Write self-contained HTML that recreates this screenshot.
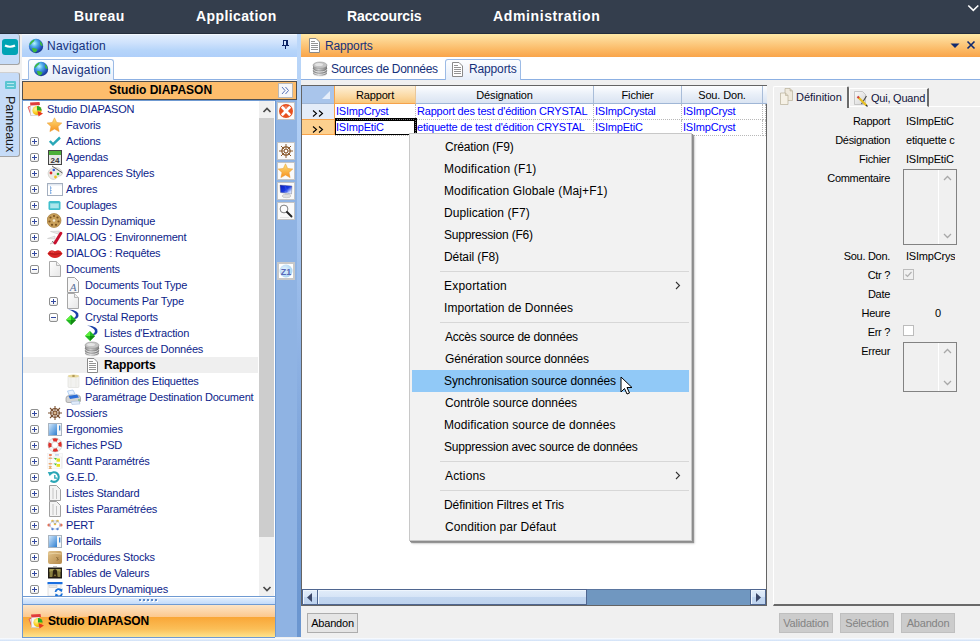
<!DOCTYPE html>
<html><head><meta charset="utf-8"><style>
*{margin:0;padding:0;box-sizing:border-box}
html,body{width:980px;height:641px;overflow:hidden;background:#f0f0f0;font-family:"Liberation Sans",sans-serif;position:relative}
.a{position:absolute}
.t{position:absolute;white-space:nowrap;line-height:1}
#top{left:0;top:0;width:980px;height:34px;background:#343e4d;border-bottom:1px solid #242e3c}
.menu{position:absolute;top:8px;color:#fff;font-weight:bold;font-size:14px;line-height:16px}
#strip{left:0;top:34px;width:21px;height:607px;background:#f0f0f0}
#navhdr{left:22px;top:34px;width:275px;height:23px;background:linear-gradient(#e2eefd,#cfe2fc 35%,#b6d5fa 70%,#afcffa);border-top:1px solid #f4f9ff}
.navtxt{color:#15307a;font-size:12px}
#navtabs{left:22px;top:57px;width:275px;height:23px;background:#fff;border-bottom:1px solid #8cb0e3}
.tab{position:absolute;border:1px solid #9cbbe6;border-bottom:none;border-radius:3px 3px 0 0;background:linear-gradient(#fdfeff,#e6eefa)}
#sect{left:22px;top:81px;width:275px;height:19px;background:#fdbd6c;border:1px solid #505050}
#tree{left:22px;top:100px;width:253px;height:497px;background:#fff;border-left:1px solid #6f9ad2;border-top:1px solid #6f9ad2}
.ti{position:absolute;height:16px;font-size:11px;letter-spacing:-0.2px;color:#0d1d8a;line-height:16px;white-space:nowrap}
.pm{position:absolute;width:9px;height:9px;border:1px solid #8e8f8f;border-radius:2px;background:linear-gradient(#fff,#fff 50%,#ececec)}
.pm:before{content:"";position:absolute;left:1px;top:3px;width:5px;height:1px;background:#3248a0}
.pm.p:after{content:"";position:absolute;left:3px;top:1px;width:1px;height:5px;background:#3248a0}
#vs{left:259px;top:101px;width:16px;height:495px;background:#f0f0f0}
#iconcol{left:275px;top:100px;width:22px;height:537px;background:#8fb3e3;border-left:1px solid #6f9ad2}
#split{left:297px;top:34px;width:4px;height:603px;background:linear-gradient(#bcd8fa,#a3c3ee 33%,#82a8dd 65%,#6b96d0 95%)}
#mhdr{left:301px;top:34px;width:679px;height:23px;background:linear-gradient(#ffe9a6,#fdd28c 30%,#fbb863 70%,#f9a44a)}
#mtabs{left:301px;top:57px;width:679px;height:23px;background:#fff;border-bottom:1px solid #8cb0e3}
#grid{left:301px;top:85px;width:466px;height:521px;background:#fff;border:1px solid #646464}
.gh{position:absolute;top:0;height:18px;padding-top:1px;background:linear-gradient(#fdfeff,#e9eff8 50%,#dae4f2);border-right:1px solid #a9bdd9;border-bottom:1px solid #9fb6d6;font-size:11px;letter-spacing:-0.15px;color:#000;text-align:center;line-height:17px}
.gc{position:absolute;height:16px;font-size:11px;letter-spacing:-0.2px;color:#0000ff;line-height:15px;white-space:nowrap;overflow:hidden;padding-left:1px;border-right:1px dotted #b8b8b8;border-bottom:1px dotted #b8b8b8}
.lab{position:absolute;font-size:11px;letter-spacing:-0.3px;color:#000;white-space:nowrap;line-height:11px;text-align:right}
.val{position:absolute;font-size:11px;letter-spacing:-0.2px;color:#000;white-space:nowrap;line-height:11px}
.btn{position:absolute;height:20px;font-size:12px;text-align:center;line-height:18px}
#menu{left:409px;top:133px;width:283px;height:408px;background:#f2f2f2;border:1px solid #c8c8c8;box-shadow:1px 1px 0 #8c8c8c,2px 2px 1px rgba(0,0,0,.35),3px 3px 2px rgba(0,0,0,.12)}
.mi{position:absolute;font-size:12px;color:#000;white-space:nowrap;line-height:12px}
.sep{position:absolute;width:249px;height:1px;background:#d7d7d7}

</style></head><body>
<div id="top" class="a"></div>
<div class="t" style="left:74px;top:8px;font:bold 14px 'Liberation Sans';letter-spacing:0.400px;color:#fff;line-height:16px">Bureau</div>
<div class="t" style="left:196px;top:8px;font:bold 14px 'Liberation Sans';letter-spacing:0.400px;color:#fff;line-height:16px">Application</div>
<div class="t" style="left:347px;top:8px;font:bold 14px 'Liberation Sans';letter-spacing:-0.111px;color:#fff;line-height:16px">Raccourcis</div>
<div class="t" style="left:493px;top:8px;font:bold 14px 'Liberation Sans';letter-spacing:0.615px;color:#fff;line-height:16px">Administration</div>
<svg class="a" style="left:966px;top:3px" width="14" height="10"><path d="M2.3 2.5 L7.3 7.3 L12.3 2.5" stroke="#fff" stroke-width="1.6" fill="none"/></svg>
<div id="strip" class="a">
  <div class="a" style="left:0;top:0;width:20px;height:31px;background:#c6dcf8;border-right:1px solid #a4a4a4;border-bottom:1px solid #a4a4a4;border-radius:0 3px 3px 0"></div>
  <div class="a" style="left:2px;top:5px;width:16px;height:16px;background:#00a3b4;border-radius:3px 3px 3px 3px"></div>
  <svg class="a" style="left:4px;top:10px" width="12" height="6"><path d="M1 1.5 Q6 4 11 1.5" stroke="#fff" stroke-width="2.2" fill="none"/></svg>
  <div class="a" style="left:0;top:38px;width:20px;height:85px;background:#c6dcf8;border-right:1px solid #a4a4a4;border-bottom:1px solid #a4a4a4;border-top:1px solid #d0d0d0;border-radius:0 3px 3px 0"></div>
  <div class="a" style="left:5px;top:47px;width:11px;height:8px;background:#5cc6d2;border-radius:1px"></div>
  <div class="a" style="left:7px;top:49px;width:7px;height:1px;background:#b6e8ee"></div>
  <div class="a" style="left:7px;top:52px;width:7px;height:1px;background:#b6e8ee"></div>
  <div class="t" style="left:16px;top:62px;transform-origin:0 0;transform:rotate(90deg);font-size:12.5px;color:#1a1a1a">Panneaux</div>
</div>
<div id="navhdr" class="a"></div>
<svg class="a" style="left:28px;top:38px" width="16" height="16" viewBox="0 0 16 16"><defs><radialGradient id="gl1" cx="0.38" cy="0.32" r="0.75"><stop offset="0" stop-color="#b8f4ff"/><stop offset="0.35" stop-color="#4aa6e8"/><stop offset="0.75" stop-color="#2050b8"/><stop offset="1" stop-color="#15287a"/></radialGradient></defs><circle cx="8" cy="8" r="7.2" fill="url(#gl1)"/><path d="M1.5 6 Q3 2 7 1.5 Q6 3.5 4 5 Q3 7 1.5 7Z M4 10 Q7 9.5 9.5 11.5 Q9 14 6 14.5 Q4 13 4 10Z M12 3 Q14.5 5 14.8 8 Q13 8.5 12 6Z" fill="#3dbb3d"/></svg>
<div class="t" style="left:47px;top:39px;font:12px 'Liberation Sans';letter-spacing:0.222px;color:#15307a;line-height:14px">Navigation</div>
<svg class="a" style="left:281px;top:39px" width="9" height="11" shape-rendering="crispEdges" fill="#0a2264"><rect x="2" y="1" width="5" height="1"/><rect x="2" y="1" width="1" height="5"/><rect x="5" y="1" width="2" height="5"/><rect x="1" y="6" width="7" height="1"/><rect x="4" y="7" width="1" height="3"/></svg>
<div id="navtabs" class="a">
  <div class="tab" style="left:6px;top:2px;width:86px;height:21px"></div>
</div>
<svg class="a" style="left:33px;top:61px" width="16" height="16" viewBox="0 0 16 16"><defs><radialGradient id="gl2" cx="0.38" cy="0.32" r="0.75"><stop offset="0" stop-color="#b8f4ff"/><stop offset="0.35" stop-color="#4aa6e8"/><stop offset="0.75" stop-color="#2050b8"/><stop offset="1" stop-color="#15287a"/></radialGradient></defs><circle cx="8" cy="8" r="7.2" fill="url(#gl2)"/><path d="M1.5 6 Q3 2 7 1.5 Q6 3.5 4 5 Q3 7 1.5 7Z M4 10 Q7 9.5 9.5 11.5 Q9 14 6 14.5 Q4 13 4 10Z M12 3 Q14.5 5 14.8 8 Q13 8.5 12 6Z" fill="#3dbb3d"/></svg>
<div class="t" style="left:52px;top:63px;font:12px 'Liberation Sans';letter-spacing:0.222px;color:#15307a;line-height:14px">Navigation</div>
<div id="sect" class="a"></div>
<div class="t" style="left:109px;top:84px;font:bold 12px 'Liberation Sans';letter-spacing:0.000px;color:#000;line-height:12px">Studio DIAPASON</div>
<div class="a" style="left:278px;top:83px;width:15px;height:15px;background:#f6f7fa;border:1px solid #b9b9b9"></div>
<svg class="a" style="left:280px;top:85px" width="11" height="11"><path d="M2 2 L5 5.5 L2 9 M5.5 2 L8.5 5.5 L5.5 9" stroke="#5a74b8" stroke-width="1" fill="none"/></svg>
<div id="tree" class="a"></div>
<svg class="a" style="left:27px;top:101px" width="16" height="16" viewBox="0 0 16 16"><defs><radialGradient id="sbg" cx="0.35" cy="0.35" r="0.7"><stop offset="0" stop-color="#fff4a0"/><stop offset="0.6" stop-color="#f8d020"/><stop offset="1" stop-color="#e8a010"/></radialGradient></defs><path d="M1 6 L4 5 L7 13 L4 14Z" fill="#f5c8c8" stroke="#e04848" stroke-width="0.8"/><rect x="3.5" y="3.5" width="8" height="11" fill="#f4f6f8" stroke="#c8c8c8" stroke-width="0.6"/><path d="M3 1.5 L12.5 1 L13 4 L3.5 4.5Z" fill="#e03c3c"/><circle cx="10" cy="9.5" r="4.6" fill="url(#sbg)"/><path d="M10 9.5 V4.9 A4.6 4.6 0 0 1 14.6 9.5Z" fill="#28a828"/><path d="M10.5 10 L16 12.5 L11.5 15.5Z" fill="#e83a20"/></svg>
<div class="ti" style="left:47px;top:101px">Studio DIAPASON</div>
<svg class="a" style="left:47px;top:117px" width="16" height="16" viewBox="0 0 16 16"><defs><linearGradient id="stg" x1="0" y1="0" x2="0" y2="1"><stop offset="0" stop-color="#fde27a"/><stop offset="1" stop-color="#f7901e"/></linearGradient></defs><path d="M7.5 0.8 L9.7 5.5 L14.8 6 L11 9.5 L12.1 14.6 L7.5 12 L2.9 14.6 L4 9.5 L0.2 6 L5.3 5.5 Z" fill="url(#stg)" stroke="#e8962a" stroke-width="0.5" stroke-linejoin="round"/></svg>
<div class="ti" style="left:66px;top:117px">Favoris</div>
<div class="pm p" style="left:30px;top:137px"></div>
<svg class="a" style="left:47px;top:133px" width="16" height="16" viewBox="0 0 16 16"><path d="M2.8 8 L6 11.3 L13 4.5" stroke="#2aa8b8" stroke-width="2.5" fill="none"/></svg>
<div class="ti" style="left:66px;top:133px">Actions</div>
<div class="pm p" style="left:30px;top:153px"></div>
<svg class="a" style="left:47px;top:149px" width="16" height="16" viewBox="0 0 16 16"><rect x="1.5" y="1.5" width="13" height="14" fill="#e6e6e6" stroke="#444"/><rect x="2" y="2" width="12" height="4" fill="#4caf38"/><text x="8" y="14" font-size="8" font-weight="bold" text-anchor="middle" fill="#333" font-family="Liberation Sans">24</text></svg>
<div class="ti" style="left:66px;top:149px">Agendas</div>
<div class="pm p" style="left:30px;top:169px"></div>
<svg class="a" style="left:47px;top:165px" width="16" height="16" viewBox="0 0 16 16"><path d="M8 2.5 C13 2.5 15.5 5.5 15 9 C14.5 11.5 12 10.5 10.5 12 C9 14 7 15 4.5 14 C1.5 12.5 0.5 9 1.5 6.5 C2.5 4 5 2.5 8 2.5Z" fill="#ecebe6" stroke="#b8b8b0" stroke-width="0.5"/><circle cx="4" cy="8" r="1.4" fill="#d82a2a"/><circle cx="6.8" cy="5" r="1.3" fill="#2a5ad8"/><circle cx="11" cy="9" r="1.3" fill="#2aa82a"/><circle cx="8.5" cy="12" r="1.4" fill="#f0c020"/><path d="M5 1 L15.5 8" stroke="#555" stroke-width="0.9"/></svg>
<div class="ti" style="left:66px;top:165px">Apparences Styles</div>
<div class="pm p" style="left:30px;top:185px"></div>
<svg class="a" style="left:47px;top:181px" width="16" height="16" viewBox="0 0 16 16"><rect x="0.5" y="2.5" width="15" height="12" fill="#fff" stroke="#a4afbf"/><rect x="1" y="3" width="14" height="1.5" fill="#e2e8f0"/><path d="M3.5 5.5 V13 M3.5 7 H5.5 M3.5 9.5 H5.5 M3.5 12 H5.5" stroke="#4a8ad8" stroke-width="1" stroke-dasharray="1 1" fill="none"/></svg>
<div class="ti" style="left:66px;top:181px">Arbres</div>
<div class="pm p" style="left:30px;top:201px"></div>
<svg class="a" style="left:47px;top:197px" width="16" height="16" viewBox="0 0 16 16"><rect x="1.5" y="4" width="12" height="9" rx="1.5" fill="#3fbfcc"/><rect x="3" y="6" width="9" height="5.5" fill="#7fd8e0"/><rect x="3.5" y="7.5" width="8" height="1" fill="#d8f4f7"/><rect x="3.5" y="9.5" width="8" height="1" fill="#d8f4f7"/></svg>
<div class="ti" style="left:66px;top:197px">Couplages</div>
<div class="pm p" style="left:30px;top:217px"></div>
<svg class="a" style="left:47px;top:213px" width="16" height="16" viewBox="0 0 16 16"><circle cx="7" cy="7.5" r="7" fill="#c9a05a" stroke="#9a7030" stroke-width="0.6"/><g fill="#7a5220"><circle cx="7" cy="3" r="1.1"/><circle cx="10.5" cy="4.5" r="1.1"/><circle cx="11.5" cy="8.5" r="1.1"/><circle cx="9" cy="11.8" r="1.1"/><circle cx="5" cy="11.8" r="1.1"/><circle cx="2.5" cy="8.5" r="1.1"/><circle cx="3.5" cy="4.5" r="1.1"/></g><circle cx="7" cy="7.5" r="1.3" fill="#f4e8d0"/></svg>
<div class="ti" style="left:66px;top:213px">Dessin Dynamique</div>
<div class="pm p" style="left:30px;top:233px"></div>
<svg class="a" style="left:47px;top:229px" width="16" height="16" viewBox="0 0 16 16"><path d="M3.5 2.5 L12.5 2 L11 5 Z" fill="#e8e8e8" stroke="#c0c0c0" stroke-width="0.5"/><path d="M0.5 9.5 L8 7 L8 10 Z" fill="#eaeaea" stroke="#c0c0c0" stroke-width="0.5"/><path d="M3 15 L8 11 L9 13 Z" fill="#e4e4e4" stroke="#b8b8b8" stroke-width="0.5"/><path d="M5 12 L7 14" stroke="#666" stroke-width="0.8"/><path d="M13.8 4.2 L8 14" stroke="#c8102e" stroke-width="3" stroke-linecap="round"/></svg>
<div class="ti" style="left:66px;top:229px">DIALOG : Environnement</div>
<div class="pm p" style="left:30px;top:249px"></div>
<svg class="a" style="left:47px;top:245px" width="16" height="16" viewBox="0 0 16 16"><path d="M0.5 8.5 Q3 4.5 6 5.5 Q7.5 6 8 6.3 Q8.5 6 10 5.5 Q13 4.5 15.5 8.5 Q12.5 13 8 13 Q3.5 13 0.5 8.5Z" fill="#d82424"/><path d="M1.5 8.5 Q8 10 14.5 8.5" stroke="#9a1010" stroke-width="0.7" fill="none"/><path d="M4 7 Q6 6.5 7 7.5" stroke="#f07070" stroke-width="0.6" fill="none"/></svg>
<div class="ti" style="left:66px;top:245px">DIALOG : Requêtes</div>
<div class="pm m" style="left:30px;top:265px"></div>
<svg class="a" style="left:47px;top:261px" width="16" height="16" viewBox="0 0 16 16"><defs><linearGradient id="pgg" x1="0" y1="0" x2="1" y2="1"><stop offset="0" stop-color="#ffffff"/><stop offset="1" stop-color="#e6e6e6"/></linearGradient></defs><path d="M2.5 0.5 H9.5 L13.5 4.5 V15.5 H2.5 Z" fill="url(#pgg)" stroke="#a8a8a8"/><path d="M9.5 0.5 V4.5 H13.5" fill="#f0f0f0" stroke="#b8b8b8"/></svg>
<div class="ti" style="left:66px;top:261px">Documents</div>
<svg class="a" style="left:65px;top:277px" width="16" height="16" viewBox="0 0 16 16"><path d="M2.5 0.5 H9.5 L13.5 4.5 V15.5 H2.5 Z" fill="#f8f8f8" stroke="#a0a0a0"/><text x="8" y="13.5" font-size="11" font-style="italic" font-family="Liberation Serif" text-anchor="middle" fill="#5a6f98">A</text></svg>
<div class="ti" style="left:85px;top:277px">Documents Tout Type</div>
<div class="pm p" style="left:49px;top:297px"></div>
<svg class="a" style="left:65px;top:293px" width="16" height="16" viewBox="0 0 16 16"><defs><linearGradient id="pgg" x1="0" y1="0" x2="1" y2="1"><stop offset="0" stop-color="#ffffff"/><stop offset="1" stop-color="#e6e6e6"/></linearGradient></defs><path d="M2.5 0.5 H9.5 L13.5 4.5 V15.5 H2.5 Z" fill="url(#pgg)" stroke="#a8a8a8"/><path d="M9.5 0.5 V4.5 H13.5" fill="#f0f0f0" stroke="#b8b8b8"/></svg>
<div class="ti" style="left:85px;top:293px">Documents Par Type</div>
<div class="pm m" style="left:49px;top:313px"></div>
<svg class="a" style="left:65px;top:309px" width="16" height="16" viewBox="0 0 16 16"><path d="M3 0.5 Q14.5 1 13.5 7 Q12.5 10.5 8 9.8 Q11 8.5 11 6 Q10 2.5 3 0.5Z" fill="#1c40a8"/><path d="M6 6 L11 11 L6 16 L1 11Z" fill="#22b822"/><path d="M6 6 L1 11 H6Z" fill="#5cf03c"/><path d="M6 11 H11 L6 16Z" fill="#138a13"/></svg>
<div class="ti" style="left:85px;top:309px">Crystal Reports</div>
<svg class="a" style="left:84px;top:325px" width="16" height="16" viewBox="0 0 16 16"><path d="M3 0.5 Q14.5 1 13.5 7 Q12.5 10.5 8 9.8 Q11 8.5 11 6 Q10 2.5 3 0.5Z" fill="#1c40a8"/><path d="M6 6 L11 11 L6 16 L1 11Z" fill="#22b822"/><path d="M6 6 L1 11 H6Z" fill="#5cf03c"/><path d="M6 11 H11 L6 16Z" fill="#138a13"/></svg>
<div class="ti" style="left:104px;top:325px">Listes d'Extraction</div>
<svg class="a" style="left:84px;top:341px" width="16" height="16" viewBox="0 0 16 16"><defs><linearGradient id="dbg" x1="0" y1="0" x2="1" y2="0"><stop offset="0" stop-color="#8a8a8a"/><stop offset="0.4" stop-color="#d0d0d0"/><stop offset="1" stop-color="#7a7a7a"/></linearGradient></defs><path d="M1 4 V12.5 A7 2.8 0 0 0 15 12.5 V4Z" fill="url(#dbg)"/><ellipse cx="8" cy="4.2" rx="7" ry="3.2" fill="#c4c4c4" stroke="#8c8c8c" stroke-width="0.5"/><ellipse cx="7" cy="3.5" rx="4" ry="1.6" fill="#e4e4e4"/><path d="M1 8 A7 2.8 0 0 0 15 8 M1 10.3 A7 2.8 0 0 0 15 10.3 M1 12.5 A7 2.8 0 0 0 15 12.5" stroke="#f4f4f4" stroke-width="0.8" fill="none"/><path d="M1 7.2 A7 2.8 0 0 0 15 7.2 M1 9.5 A7 2.8 0 0 0 15 9.5" stroke="#6a6a6a" stroke-width="0.5" fill="none"/></svg>
<div class="ti" style="left:104px;top:341px">Sources de Données</div>
<div class="a" style="left:23px;top:357px;width:235px;height:16px;background:#efefef"></div>
<svg class="a" style="left:84px;top:357px" width="16" height="16" viewBox="0 0 16 16"><path d="M3.5 1.5 H10 L13.5 5 V15.5 H3.5 Z" fill="#fff" stroke="#8a8a8a"/><path d="M5 6.5 H12 M5 8.5 H12 M5 10.5 H12 M5 12.5 H12 M5 4.5 H9" stroke="#888" stroke-width="0.9"/></svg>
<div class="ti" style="left:104px;top:357px;font-weight:bold;color:#000;letter-spacing:-0.15px;font-size:12px">Rapports</div>
<svg class="a" style="left:65px;top:373px" width="16" height="16" viewBox="0 0 16 16"><rect x="3" y="2.5" width="11" height="12" rx="1" fill="#f2f2f0" stroke="#dcdcd6" stroke-width="0.6"/><ellipse cx="8.5" cy="3" rx="5.5" ry="1.6" fill="#e8d89a"/><ellipse cx="8.5" cy="3" rx="1.5" ry="0.7" fill="#9a8040"/><path d="M6 4.5 V14 M11 4.5 V14" stroke="#e6e6e0" stroke-width="0.6"/></svg>
<div class="ti" style="left:85px;top:373px">Définition des Etiquettes</div>
<svg class="a" style="left:65px;top:389px" width="16" height="16" viewBox="0 0 16 16"><path d="M2.5 2 L8 1 L10 5 L4 6Z" fill="#e8f2ff" stroke="#90b8e8" stroke-width="0.6"/><path d="M1 9 Q1 7 4 6.5 L13 6 Q15.5 6.5 15.5 9 V12 Q15.5 13.5 13 13.5 H3 Q1 13.5 1 12Z" fill="#d4d4d4" stroke="#8a8a8a" stroke-width="0.6"/><path d="M3.5 7 L12 5.5 L14 8.5 L5 10Z" fill="#2a6ed8"/><circle cx="14" cy="11" r="0.7" fill="#30b030"/><path d="M6 12.5 L14 12 L15 15 L7 15.5Z" fill="#e0ecfa" stroke="#a0b8d8" stroke-width="0.5"/></svg>
<div class="ti" style="left:85px;top:389px">Paramétrage Destination Document</div>
<div class="pm p" style="left:30px;top:409px"></div>
<svg class="a" style="left:47px;top:405px" width="16" height="16" viewBox="0 0 16 16"><circle cx="8" cy="8" r="4.3" fill="none" stroke="#7a5030" stroke-width="1.3"/><path d="M8 1 V15 M1 8 H15 M3 3 L13 13 M13 3 L3 13" stroke="#7a5030" stroke-width="1.1"/><circle cx="8" cy="8" r="1.7" fill="#d9b48a" stroke="#7a5030" stroke-width="0.6"/></svg>
<div class="ti" style="left:66px;top:405px">Dossiers</div>
<div class="pm p" style="left:30px;top:425px"></div>
<svg class="a" style="left:47px;top:421px" width="16" height="16" viewBox="0 0 16 16"><defs><linearGradient id="wg" x1="0" y1="0" x2="1" y2="1"><stop offset="0" stop-color="#cfe6fb"/><stop offset="1" stop-color="#2f7fd0"/></linearGradient></defs><rect x="1.5" y="2.5" width="13" height="12" fill="#f4f6f8" stroke="#a9b4c0"/><rect x="2" y="3" width="8" height="11" fill="url(#wg)"/><rect x="12" y="4.5" width="1.3" height="5" fill="#3b86d2"/></svg>
<div class="ti" style="left:66px;top:421px">Ergonomies</div>
<div class="pm p" style="left:30px;top:441px"></div>
<svg class="a" style="left:47px;top:437px" width="16" height="16" viewBox="0 0 16 16"><circle cx="8" cy="8" r="5.2" fill="none" stroke="#f4f4f4" stroke-width="3.6"/><circle cx="8" cy="8" r="5.2" fill="none" stroke="#e0302a" stroke-width="3.6" stroke-dasharray="4.2 4" transform="rotate(-30 8 8)"/><circle cx="8" cy="8" r="7" fill="none" stroke="#bbb" stroke-width="0.5"/><circle cx="8" cy="8" r="3.3" fill="none" stroke="#bbb" stroke-width="0.5"/></svg>
<div class="ti" style="left:66px;top:437px">Fiches PSD</div>
<div class="pm p" style="left:30px;top:457px"></div>
<svg class="a" style="left:47px;top:453px" width="16" height="16" viewBox="0 0 16 16"><rect x="0.5" y="0.5" width="15" height="15" fill="#fbfbfb" stroke="#ececec" stroke-width="0.5"/><rect x="1.8" y="1" width="3.2" height="2" rx="1" fill="#e88060"/><rect x="1.5" y="4.5" width="3.5" height="1.6" rx="0.8" fill="#f0a060"/><rect x="1.5" y="10" width="3.5" height="1.6" rx="0.8" fill="#f0a060"/><path d="M1.5 13 H5 L4 14.5 L5 16 H1.5 L2.5 14.5Z" fill="#e8b070"/><rect x="8" y="1" width="4" height="1.8" fill="#c8d8f0"/><path d="M3.2 3 V13 M5 5.3 H8 M5 10.8 H8" stroke="#c8c8c8" stroke-width="0.5"/><path d="M7 5 L10 5 L8.5 7Z M7 10.5 L10 10.5 L8.5 12.5Z" fill="#40c040"/><rect x="9.5" y="5.5" width="3.5" height="3.2" fill="#e4e020"/><rect x="9.5" y="11" width="3.5" height="2.8" fill="#e4e020"/><path d="M6 4 H14.5 V15" stroke="#e0e0e0" stroke-width="0.5" fill="none"/></svg>
<div class="ti" style="left:66px;top:453px">Gantt Paramétrés</div>
<div class="pm p" style="left:30px;top:473px"></div>
<svg class="a" style="left:47px;top:469px" width="16" height="16" viewBox="0 0 16 16"><path d="M3.2 5 A4.8 4.8 0 1 1 3.6 11.5" stroke="#2aa6b6" stroke-width="2.1" fill="none"/><path d="M0.8 3 L5.5 3.2 L2.8 7.2Z" fill="#2aa6b6"/><path d="M7.8 6 V9.2 H10" stroke="#2aa6b6" stroke-width="1.3" fill="none"/></svg>
<div class="ti" style="left:66px;top:469px">G.E.D.</div>
<div class="pm p" style="left:30px;top:489px"></div>
<svg class="a" style="left:47px;top:485px" width="16" height="16" viewBox="0 0 16 16"><path d="M2.5 0.5 H9.5 L13.5 4.5 V15.5 H2.5 Z" fill="#f4f4f4" stroke="#a0a0a0"/><path d="M6 3 V14 M9.5 5 V14" stroke="#c4c4c4" stroke-width="1"/></svg>
<div class="ti" style="left:66px;top:485px">Listes Standard</div>
<div class="pm p" style="left:30px;top:505px"></div>
<svg class="a" style="left:47px;top:501px" width="16" height="16" viewBox="0 0 16 16"><path d="M2.5 0.5 H9.5 L13.5 4.5 V15.5 H2.5 Z" fill="#f4f4f4" stroke="#a0a0a0"/><path d="M6 3 V14 M9.5 5 V14" stroke="#c4c4c4" stroke-width="1"/></svg>
<div class="ti" style="left:66px;top:501px">Listes Paramétrées</div>
<div class="pm p" style="left:30px;top:521px"></div>
<svg class="a" style="left:47px;top:517px" width="16" height="16" viewBox="0 0 16 16"><circle cx="2" cy="8" r="1.6" fill="#e87050"/><circle cx="14" cy="8" r="1.6" fill="#e87050"/><circle cx="5.5" cy="4" r="1.3" fill="#f0c040"/><circle cx="10.5" cy="4" r="1.3" fill="#f0c040"/><circle cx="8" cy="7" r="1.3" fill="#f0c040"/><circle cx="5.5" cy="12" r="1.2" fill="#4a7ad0"/><circle cx="10.5" cy="12" r="1.2" fill="#4a7ad0"/><path d="M2 8 L5.5 4 L10.5 4 L14 8 L10.5 12 L5.5 12 Z M5.5 4 L8 7 L10.5 4" stroke="#90a8d8" stroke-width="0.6" fill="none"/></svg>
<div class="ti" style="left:66px;top:517px">PERT</div>
<div class="pm p" style="left:30px;top:537px"></div>
<svg class="a" style="left:47px;top:533px" width="16" height="16" viewBox="0 0 16 16"><defs><linearGradient id="wg" x1="0" y1="0" x2="1" y2="1"><stop offset="0" stop-color="#cfe6fb"/><stop offset="1" stop-color="#2f7fd0"/></linearGradient></defs><rect x="1.5" y="2.5" width="13" height="12" fill="#f4f6f8" stroke="#a9b4c0"/><rect x="2" y="3" width="8" height="11" fill="url(#wg)"/><rect x="12" y="4.5" width="1.3" height="5" fill="#3b86d2"/></svg>
<div class="ti" style="left:66px;top:533px">Portails</div>
<div class="pm p" style="left:30px;top:553px"></div>
<svg class="a" style="left:47px;top:549px" width="16" height="16" viewBox="0 0 16 16"><defs><linearGradient id="bxg" x1="0" y1="0" x2="1" y2="1"><stop offset="0" stop-color="#e2c48c"/><stop offset="1" stop-color="#b48848"/></linearGradient></defs><rect x="1" y="2" width="14" height="13" rx="2" fill="url(#bxg)"/><path d="M1.5 5 Q8 3.5 14.5 5" stroke="#f0dcb0" stroke-width="0.7" fill="none"/><path d="M9 8 L12 11 M11 8 L10 12" stroke="#8a6a3a" stroke-width="0.7"/></svg>
<div class="ti" style="left:66px;top:549px">Procédures Stocks</div>
<div class="pm p" style="left:30px;top:569px"></div>
<svg class="a" style="left:47px;top:565px" width="16" height="16" viewBox="0 0 16 16"><rect x="1" y="2.5" width="14" height="11" fill="#1e1a14"/><rect x="2.5" y="4" width="11" height="8" fill="#8a8040"/><path d="M2.5 4 H13.5 V7 Q10 5 8 6 Q5 5 2.5 7Z" fill="#a8a058"/><ellipse cx="8" cy="7.3" rx="1.7" ry="2" fill="#e8b860"/><path d="M5.8 7.5 Q6 4.2 8 4.2 Q10 4.2 10.2 7.5 L10.5 12 H9.5 Q9 9.5 8 9.3 Q7 9.5 6.5 12 H5.5Z" fill="#2a2010"/><path d="M5 12 Q8 9.5 11 12Z" fill="#3a2a10"/><rect x="6" y="1.5" width="4" height="1" fill="#888"/></svg>
<div class="ti" style="left:66px;top:565px">Tables de Valeurs</div>
<div class="pm p" style="left:30px;top:585px"></div>
<svg class="a" style="left:47px;top:581px" width="16" height="16" viewBox="0 0 16 16"><rect x="1" y="2" width="13" height="13" fill="#fafafa" stroke="#d0d0d0" stroke-width="0.6"/><rect x="0.5" y="1" width="15" height="2.2" fill="#1a6fe0"/><rect x="2" y="4.5" width="8" height="2" fill="#e8e8e8" stroke="#bbb" stroke-width="0.4"/><path d="M8.5 11 A3.3 3.3 0 0 1 14.5 9.5" stroke="#1a70d8" stroke-width="1.8" fill="none"/><path d="M15.5 7.5 L15 11 L12 9.5Z" fill="#1a70d8"/><path d="M15 12.5 A3.3 3.3 0 0 1 9 14" stroke="#1a70d8" stroke-width="1.8" fill="none"/><path d="M8 16 L8.5 12.5 L11.5 14Z" fill="#1a70d8"/></svg>
<div class="ti" style="left:66px;top:581px">Tableurs Dynamiques</div>
<div id="vs" class="a">
  <div class="a" style="left:0;top:17px;width:15px;height:419px;background:#cdcdcd"></div>
  <div class="a" style="left:15px;top:0;width:1px;height:496px;background:#fff"></div>
  <svg class="a" style="left:3px;top:5px" width="10" height="8"><path d="M1.5 6 L5 2.5 L8.5 6" stroke="#4a4a4a" stroke-width="1.7" fill="none"/></svg>
  <svg class="a" style="left:3px;top:484px" width="10" height="8"><path d="M1.5 2 L5 5.5 L8.5 2" stroke="#4a4a4a" stroke-width="1.7" fill="none"/></svg>
</div>
<div id="iconcol" class="a"></div>
<div id="split" class="a"></div>
<div class="a" style="left:22px;top:596px;width:253px;height:9px;background:linear-gradient(#fff 0,#fff 1px,#e0edfd 1px,#c3dbfb);border-top:1px solid #6f9ad2;border-bottom:1px solid #6f9ad2;border-left:1px solid #6f9ad2"></div>
<div class="a" style="left:139px;top:599px;width:2px;height:2px;background:#5a88c8;box-shadow:1px 1px 0 #fff"></div>
<div class="a" style="left:143px;top:599px;width:2px;height:2px;background:#5a88c8;box-shadow:1px 1px 0 #fff"></div>
<div class="a" style="left:147px;top:599px;width:2px;height:2px;background:#5a88c8;box-shadow:1px 1px 0 #fff"></div>
<div class="a" style="left:151px;top:599px;width:2px;height:2px;background:#5a88c8;box-shadow:1px 1px 0 #fff"></div>
<div class="a" style="left:155px;top:599px;width:2px;height:2px;background:#5a88c8;box-shadow:1px 1px 0 #fff"></div>
<div class="a" style="left:22px;top:605px;width:253px;height:33px;background:linear-gradient(#fde4c6 0,#fcc88e 12px,#f9a637 12px,#fbbf58 24px,#fee38c 32px);border-left:1px solid #6f9ad2;border-bottom:1px solid #6f9ad2"></div>
<svg class="a" style="left:28px;top:613px" width="16" height="16" viewBox="0 0 16 16"><defs><radialGradient id="sbg" cx="0.35" cy="0.35" r="0.7"><stop offset="0" stop-color="#fff4a0"/><stop offset="0.6" stop-color="#f8d020"/><stop offset="1" stop-color="#e8a010"/></radialGradient></defs><path d="M1 6 L4 5 L7 13 L4 14Z" fill="#f5c8c8" stroke="#e04848" stroke-width="0.8"/><rect x="3.5" y="3.5" width="8" height="11" fill="#f4f6f8" stroke="#c8c8c8" stroke-width="0.6"/><path d="M3 1.5 L12.5 1 L13 4 L3.5 4.5Z" fill="#e03c3c"/><circle cx="10" cy="9.5" r="4.6" fill="url(#sbg)"/><path d="M10 9.5 V4.9 A4.6 4.6 0 0 1 14.6 9.5Z" fill="#28a828"/><path d="M10.5 10 L16 12.5 L11.5 15.5Z" fill="#e83a20"/></svg>
<div class="t" style="left:48px;top:615px;font:bold 12px 'Liberation Sans';letter-spacing:-0.143px;color:#000;line-height:12px">Studio DIAPASON</div>
<div class="a" style="left:277px;top:102px;width:18px;height:18px;background:#fafafa;border:1px solid #c4c4c4"></div>
<svg class="a" style="left:278px;top:103px" width="16" height="16" viewBox="0 0 16 16"><circle cx="8" cy="8" r="7" fill="#e8501e"/><path d="M8 2 L11 5 H5Z" fill="#f29070" opacity="0.7"/><path d="M3.8 3.8 L12.2 12.2 M12.2 3.8 L3.8 12.2" stroke="#fff" stroke-width="2.7"/></svg>
<div class="a" style="left:277px;top:142px;width:18px;height:18px;background:#fafafa;border:1px solid #c4c4c4"></div>
<svg class="a" style="left:278px;top:143px" width="16" height="16" viewBox="0 0 16 16"><circle cx="8" cy="8" r="4.2" fill="none" stroke="#8a5a2e" stroke-width="1.2"/><path d="M8 1 V15 M1 8 H15 M3 3 L13 13 M13 3 L3 13" stroke="#8a5a2e" stroke-width="1"/><circle cx="8" cy="8" r="1.8" fill="#fff" stroke="#8a5a2e" stroke-width="0.8"/></svg>
<div class="a" style="left:277px;top:162px;width:18px;height:18px;background:#fafafa;border:1px solid #c4c4c4"></div>
<svg class="a" style="left:278px;top:163px" width="16" height="16" viewBox="0 0 16 16"><defs><linearGradient id="stg" x1="0" y1="0" x2="0" y2="1"><stop offset="0" stop-color="#fde27a"/><stop offset="1" stop-color="#f7901e"/></linearGradient></defs><path d="M7.5 0.8 L9.7 5.5 L14.8 6 L11 9.5 L12.1 14.6 L7.5 12 L2.9 14.6 L4 9.5 L0.2 6 L5.3 5.5 Z" fill="url(#stg)" stroke="#e8962a" stroke-width="0.5" stroke-linejoin="round"/></svg>
<div class="a" style="left:277px;top:182px;width:18px;height:18px;background:#fafafa;border:1px solid #c4c4c4"></div>
<svg class="a" style="left:278px;top:183px" width="16" height="16" viewBox="0 0 16 16"><defs><linearGradient id="mg" x1="0" y1="0" x2="1" y2="1"><stop offset="0" stop-color="#0a1ab8"/><stop offset="0.5" stop-color="#1a3ae0"/><stop offset="0.8" stop-color="#c8d8ff"/><stop offset="1" stop-color="#f0f4ff"/></linearGradient></defs><path d="M2 2 L14 3 L13.5 11 L2.5 9.5Z" fill="url(#mg)" stroke="#667" stroke-width="0.4"/><path d="M7 2.5 L9 9" stroke="#3050f0" stroke-width="1.5" opacity="0.6"/><ellipse cx="8.5" cy="13" rx="4.5" ry="1.7" fill="#e0e0e0" stroke="#b0b0b0" stroke-width="0.5"/><rect x="7" y="10" width="3" height="2" fill="#c8c8c8"/></svg>
<div class="a" style="left:277px;top:202px;width:18px;height:18px;background:#fafafa;border:1px solid #c4c4c4"></div>
<svg class="a" style="left:278px;top:203px" width="16" height="16" viewBox="0 0 16 16"><circle cx="6" cy="6" r="3.9" fill="#fdfdfd" stroke="#707070" stroke-width="0.9"/><path d="M9 9 L13.5 13.5" stroke="#222" stroke-width="1.9" stroke-linecap="round"/><path d="M2 14.5 H11" stroke="#d8d8d8" stroke-width="0.6"/></svg>
<div class="a" style="left:277px;top:262px;width:18px;height:18px;background:#fff;border:2px solid #c8c8c8"></div>
<svg class="a" style="left:278px;top:263px" width="16" height="16" viewBox="0 0 16 16"><defs><radialGradient id="zg" cx="0.4" cy="0.4" r="0.7"><stop offset="0" stop-color="#e8f6ff"/><stop offset="1" stop-color="#9fcdf0"/></radialGradient></defs><circle cx="8" cy="8" r="6.5" fill="url(#zg)"/><text x="8" y="11.5" font-size="9" font-weight="bold" text-anchor="middle" fill="#5a6ab8" font-family="Liberation Sans">Z1</text></svg>
<div id="mhdr" class="a"></div>
<svg class="a" style="left:306px;top:37px" width="16" height="16" viewBox="0 0 16 16"><path d="M3.5 1.5 H10 L13.5 5 V15.5 H3.5 Z" fill="#fff" stroke="#8a8a8a"/><path d="M5 6.5 H12 M5 8.5 H12 M5 10.5 H12 M5 12.5 H12 M5 4.5 H9" stroke="#888" stroke-width="0.9"/></svg>
<div class="t" style="left:325px;top:40px;font:12px 'Liberation Sans';letter-spacing:-0.143px;color:#15307a;line-height:12px">Rapports</div>
<svg class="a" style="left:950px;top:43px" width="10" height="6"><path d="M0.5 0.5 H9.5 L5 5Z" fill="#102a70"/></svg>
<svg class="a" style="left:966px;top:40px" width="10" height="10"><path d="M1.5 1.5 L8.5 8.5 M8.5 1.5 L1.5 8.5" stroke="#102a70" stroke-width="1.6"/></svg>
<div id="mtabs" class="a">
  <div class="tab" style="left:144px;top:2px;width:76px;height:21px"></div>
</div>
<svg class="a" style="left:312px;top:61px" width="16" height="16" viewBox="0 0 16 16"><defs><linearGradient id="dbg" x1="0" y1="0" x2="1" y2="0"><stop offset="0" stop-color="#8a8a8a"/><stop offset="0.4" stop-color="#d0d0d0"/><stop offset="1" stop-color="#7a7a7a"/></linearGradient></defs><path d="M1 4 V12.5 A7 2.8 0 0 0 15 12.5 V4Z" fill="url(#dbg)"/><ellipse cx="8" cy="4.2" rx="7" ry="3.2" fill="#c4c4c4" stroke="#8c8c8c" stroke-width="0.5"/><ellipse cx="7" cy="3.5" rx="4" ry="1.6" fill="#e4e4e4"/><path d="M1 8 A7 2.8 0 0 0 15 8 M1 10.3 A7 2.8 0 0 0 15 10.3 M1 12.5 A7 2.8 0 0 0 15 12.5" stroke="#f4f4f4" stroke-width="0.8" fill="none"/><path d="M1 7.2 A7 2.8 0 0 0 15 7.2 M1 9.5 A7 2.8 0 0 0 15 9.5" stroke="#6a6a6a" stroke-width="0.5" fill="none"/></svg>
<div class="t" style="left:331px;top:63px;font:12px 'Liberation Sans';letter-spacing:-0.294px;color:#15307a;line-height:12px">Sources de Données</div>
<svg class="a" style="left:449px;top:61px" width="16" height="16" viewBox="0 0 16 16"><path d="M3.5 1.5 H10 L13.5 5 V15.5 H3.5 Z" fill="#fff" stroke="#8a8a8a"/><path d="M5 6.5 H12 M5 8.5 H12 M5 10.5 H12 M5 12.5 H12 M5 4.5 H9" stroke="#888" stroke-width="0.9"/></svg>
<div class="t" style="left:469px;top:63px;font:12px 'Liberation Sans';letter-spacing:-0.143px;color:#15307a;line-height:12px">Rapports</div>
<div id="grid" class="a">
  <div class="gh" style="left:0;width:33px;background:#a9c5eb;border-right:1px solid #c5d8f1"></div>
  <svg class="a" style="left:20px;top:5px" width="9" height="9"><path d="M8 0 V8 H0Z" fill="#e6eefa"/></svg>
  <div class="gh" style="left:33px;width:81px;background:linear-gradient(#fdf0d8,#fbd9a3 60%,#f8c77d);border-bottom:1px solid #f6a24a;border-right:1px solid #e9c79a">Rapport</div>
  <div class="gh" style="left:114px;width:178px">Désignation</div>
  <div class="gh" style="left:292px;width:88px">Fichier</div>
  <div class="gh" style="left:380px;width:81px">Sou. Don.</div>
  <div class="gh" style="left:461px;width:4px;border-right:none"></div>
</div>
<div class="a" style="left:302px;top:104px;width:32px;height:15px;background:#e4ecf8"></div>
<div class="a" style="left:302px;top:119px;width:32px;height:16px;background:#fdd08e;border-top:1px solid #f7a34a;border-bottom:1px solid #f7a34a"></div>
<div class="a" style="left:334px;top:86px;width:1px;height:49px;background:#f7a34a"></div>
<svg class="a" style="left:312px;top:110px" width="12" height="8"><path d="M1 0.5 L4.5 3.5 L1 6.5 M7 0.5 L10.5 3.5 L7 6.5" stroke="#000" stroke-width="1.1" fill="none"/></svg>
<svg class="a" style="left:312px;top:126px" width="12" height="8"><path d="M1 0.5 L4.5 3.5 L1 6.5 M7 0.5 L10.5 3.5 L7 6.5" stroke="#000" stroke-width="1.1" fill="none"/></svg>
<div class="gc" style="left:335px;top:104px;width:81px">ISImpCryst</div>
<div class="gc" style="left:416px;top:104px;width:178px">Rapport des test d'édition CRYSTAL</div>
<div class="gc" style="left:594px;top:104px;width:88px">ISImpCrystal</div>
<div class="gc" style="left:682px;top:104px;width:81px">ISImpCryst</div>
<div class="gc" style="left:763px;top:104px;width:3px"></div>
<div class="gc" style="left:335px;top:120px;width:81px">ISImpEtiC</div>
<div class="gc" style="left:416px;top:120px;width:178px">etiquette de test d'édition CRYSTAL</div>
<div class="gc" style="left:594px;top:120px;width:88px">ISImpEtiC</div>
<div class="gc" style="left:682px;top:120px;width:81px">ISImpCryst</div>
<div class="gc" style="left:763px;top:120px;width:3px"></div>
<div class="a" style="left:335px;top:118px;width:82px;height:17px;border-left:1px solid #000;border-bottom:1px solid #000;border-top:3px solid #000;border-right:3px solid #000"></div>
<div class="a" style="left:336px;top:119px;width:80px;height:1px;background:repeating-linear-gradient(90deg,#000 0 1px,#777 1px 2px)"></div>
<div class="a" style="left:415px;top:119px;width:1px;height:15px;background:repeating-linear-gradient(#000 0 1px,#777 1px 2px)"></div>
<div class="a" style="left:302px;top:589px;width:464px;height:16px;background:#7097c0;border-top:1px solid #5a76a0"></div>
<div class="a" style="left:302px;top:589px;width:16px;height:16px;background:linear-gradient(#e2edfa,#d6e4f6 50%,#c2d6f0 50%,#bed3ee);border:1px solid #4f6690;box-shadow:inset 1px 1px 0 #eef5fd"></div>
<svg class="a" style="left:305px;top:591px" width="10" height="13"><path d="M7 2 V11 L2 6.5Z" fill="#3a4668"/></svg>
<div class="a" style="left:317px;top:589px;width:270px;height:16px;background:linear-gradient(#e2edfa,#d6e4f6 50%,#c2d6f0 50%,#bed3ee);border:1px solid #4f6690;box-shadow:inset 1px 1px 0 #eef5fd"></div>
<div class="a" style="left:750px;top:589px;width:16px;height:16px;background:linear-gradient(#e2edfa,#d6e4f6 50%,#c2d6f0 50%,#bed3ee);border:1px solid #4f6690;box-shadow:inset 1px 1px 0 #eef5fd"></div>
<svg class="a" style="left:753px;top:591px" width="10" height="13"><path d="M3 2 V11 L8 6.5Z" fill="#3a4668"/></svg>
<div class="a" style="left:773px;top:106px;width:207px;height:500px;border-left:1px solid #fff;border-top:1px solid #fff;border-bottom:2px solid #696969;background:#f0f0f0"></div>
<div class="a" style="left:773px;top:86px;width:76px;height:22px;background:#f0f0f0;border-left:1px solid #fff;border-top:1px solid #fff;border-right:2px solid #6a6a6a;border-radius:2px 2px 0 0"></div>
<div class="a" style="left:849px;top:88px;width:80px;height:19px;background:#f0f0f0;border-left:1px solid #fff;border-top:1px solid #fff;border-right:2px solid #6a6a6a;border-bottom:1px solid #fff"></div>
<svg class="a" style="left:779px;top:88px" width="16" height="18"><path d="M6 0.5 H11 L13.5 3 V12.5 H6Z" fill="#efe9dc" stroke="#b8b09a" stroke-width="0.7"/><path d="M11 0.5 V3 H13.5" fill="#d8d0bc" stroke="#b8b09a" stroke-width="0.6"/><path d="M1.5 5 H6.5 L9 7.5 V16.5 H1.5Z" fill="#f6f1e6" stroke="#b8b09a" stroke-width="0.7"/><path d="M6.5 5 V7.5 H9" fill="#d8d0bc" stroke="#b8b09a" stroke-width="0.6"/></svg>
<div class="t" style="left:796px;top:92px;font:11px 'Liberation Sans';letter-spacing:0.000px;color:#10143c;line-height:11px">Définition</div>
<svg class="a" style="left:853px;top:90px" width="16" height="17"><defs><linearGradient id="qg" x1="0" y1="0" x2="1" y2="1"><stop offset="0" stop-color="#fafafa"/><stop offset="1" stop-color="#d4d4d4"/></linearGradient></defs><path d="M1.5 1.5 H9.5 L12.5 4.5 V14.5 H1.5Z" fill="url(#qg)" stroke="#b4b4b4" stroke-width="0.7"/><path d="M13.5 6 L8.5 14" stroke="#444" stroke-width="1.1"/><path d="M5 7 L13.5 15.5" stroke="#e8c020" stroke-width="2.2"/><path d="M4.5 6.5 L6 8" stroke="#d04040" stroke-width="2.2"/><path d="M13 15 L14.5 16.5" stroke="#333" stroke-width="1.2"/></svg>
<div class="t" style="left:871px;top:93px;font:11px 'Liberation Sans';letter-spacing:-0.222px;color:#10143c;line-height:11px">Qui, Quand</div>
<div class="lab" style="right:90px;top:116px">Rapport</div>
<div class="val" style="left:906px;top:116px;width:49px;overflow:hidden">ISImpEtiC</div>
<div class="lab" style="right:90px;top:135px">Désignation</div>
<div class="val" style="left:906px;top:135px;width:49px;overflow:hidden">etiquette c</div>
<div class="lab" style="right:90px;top:154px">Fichier</div>
<div class="val" style="left:906px;top:154px;width:49px;overflow:hidden">ISImpEtiC</div>
<div class="lab" style="right:90px;top:173px">Commentaire</div>
<div class="lab" style="right:90px;top:251px">Sou. Don.</div>
<div class="val" style="left:906px;top:251px;width:49px;overflow:hidden">ISImpCrys</div>
<div class="lab" style="right:90px;top:270px">Ctr ?</div>
<div class="lab" style="right:90px;top:289px">Date</div>
<div class="lab" style="right:90px;top:308px">Heure</div>
<div class="lab" style="right:90px;top:327px">Err ?</div>
<div class="lab" style="right:90px;top:346px">Erreur</div>
<div class="val" style="left:935px;top:308px">0</div>
<div class="a" style="left:903px;top:169px;width:54px;height:76px;border:1px solid #828282;background:#f0f0f0"></div>
<div class="a" style="left:938px;top:170px;width:1px;height:74px;background:#fff"></div>
<svg class="a" style="left:943px;top:175px" width="9" height="6"><path d="M1 5 L4.5 1.5 L8 5" stroke="#a8a8a8" stroke-width="1.3" fill="none"/></svg>
<svg class="a" style="left:943px;top:233px" width="9" height="6"><path d="M1 1 L4.5 4.5 L8 1" stroke="#a8a8a8" stroke-width="1.3" fill="none"/></svg>
<div class="a" style="left:903px;top:342px;width:54px;height:50px;border:1px solid #828282;background:#f0f0f0"></div>
<div class="a" style="left:938px;top:343px;width:1px;height:48px;background:#fff"></div>
<svg class="a" style="left:943px;top:348px" width="9" height="6"><path d="M1 5 L4.5 1.5 L8 5" stroke="#a8a8a8" stroke-width="1.3" fill="none"/></svg>
<svg class="a" style="left:943px;top:380px" width="9" height="6"><path d="M1 1 L4.5 4.5 L8 1" stroke="#a8a8a8" stroke-width="1.3" fill="none"/></svg>
<div class="a" style="left:903px;top:269px;width:11px;height:11px;border:1px solid #bcbcbc;background:#f0f0f0"></div>
<svg class="a" style="left:904px;top:270px" width="9" height="9"><path d="M1.5 4.5 L3.5 6.5 L7.5 2" stroke="#b0b0b0" stroke-width="1.2" fill="none"/></svg>
<div class="a" style="left:903px;top:325px;width:11px;height:11px;border:1px solid #bcbcbc;background:#fff"></div>
<div class="btn" style="left:307px;top:613px;width:51px;background:#e5e5e5;border:1px solid #adadad;font-size:11px;letter-spacing:-0.2px;color:#000">Abandon</div>
<div class="btn" style="left:779px;top:613px;width:54px;background:#cccccc;border:1px solid #bfbfbf;font-size:11px;letter-spacing:-0.2px;color:#838383">Validation</div>
<div class="btn" style="left:840px;top:613px;width:54px;background:#cccccc;border:1px solid #bfbfbf;font-size:11px;letter-spacing:-0.2px;color:#838383">Sélection</div>
<div class="btn" style="left:901px;top:613px;width:54px;background:#cccccc;border:1px solid #bfbfbf;font-size:11px;letter-spacing:-0.2px;color:#838383">Abandon</div>
<div class="a" style="left:0;top:638px;width:980px;height:3px;background:linear-gradient(#fdfeff,#e6effb 50%,#cddff7)"></div>
<div id="menu" class="a"></div>
<div class="a" style="left:412px;top:370px;width:277px;height:22px;background:#91c9f7"></div>
<div class="sep" style="left:440px;top:271px"></div>
<div class="sep" style="left:440px;top:322px"></div>
<div class="sep" style="left:440px;top:461px"></div>
<div class="sep" style="left:440px;top:490px"></div>
<div class="t" style="left:445px;top:141px;font:12px 'Liberation Sans';letter-spacing:-0.167px;color:#000;line-height:12px">Création (F9)</div>
<div class="t" style="left:444px;top:163px;font:12px 'Liberation Sans';letter-spacing:0.188px;color:#000;line-height:12px">Modification (F1)</div>
<div class="t" style="left:444px;top:185px;font:12px 'Liberation Sans';letter-spacing:0.107px;color:#000;line-height:12px">Modification Globale (Maj+F1)</div>
<div class="t" style="left:444px;top:207px;font:12px 'Liberation Sans';letter-spacing:0.067px;color:#000;line-height:12px">Duplication (F7)</div>
<div class="t" style="left:444px;top:229px;font:12px 'Liberation Sans';letter-spacing:-0.200px;color:#000;line-height:12px">Suppression (F6)</div>
<div class="t" style="left:444px;top:251px;font:12px 'Liberation Sans';letter-spacing:-0.100px;color:#000;line-height:12px">Détail (F8)</div>
<div class="t" style="left:444px;top:280px;font:12px 'Liberation Sans';letter-spacing:0.200px;color:#000;line-height:12px">Exportation</div>
<div class="t" style="left:444px;top:302px;font:12px 'Liberation Sans';letter-spacing:0.048px;color:#000;line-height:12px">Importation de Données</div>
<div class="t" style="left:445px;top:331px;font:12px 'Liberation Sans';letter-spacing:-0.227px;color:#000;line-height:12px">Accès source de données</div>
<div class="t" style="left:445px;top:353px;font:12px 'Liberation Sans';letter-spacing:-0.167px;color:#000;line-height:12px">Génération source données</div>
<div class="t" style="left:444px;top:375px;font:12px 'Liberation Sans';letter-spacing:-0.069px;color:#000;line-height:12px">Synchronisation source données</div>
<div class="t" style="left:445px;top:397px;font:12px 'Liberation Sans';letter-spacing:-0.091px;color:#000;line-height:12px">Contrôle source données</div>
<div class="t" style="left:444px;top:419px;font:12px 'Liberation Sans';letter-spacing:0.069px;color:#000;line-height:12px">Modification source de données</div>
<div class="t" style="left:444px;top:441px;font:12px 'Liberation Sans';letter-spacing:-0.212px;color:#000;line-height:12px">Suppression avec source de données</div>
<div class="t" style="left:445px;top:470px;font:12px 'Liberation Sans';letter-spacing:0.167px;color:#000;line-height:12px">Actions</div>
<div class="t" style="left:444px;top:499px;font:12px 'Liberation Sans';letter-spacing:-0.080px;color:#000;line-height:12px">Définition Filtres et Tris</div>
<div class="t" style="left:445px;top:521px;font:12px 'Liberation Sans';letter-spacing:0.053px;color:#000;line-height:12px">Condition par Défaut</div>
<svg class="a" style="left:675px;top:281px" width="6" height="9"><path d="M1 1 L4.5 4.5 L1 8" stroke="#333" stroke-width="1.1" fill="none"/></svg>
<svg class="a" style="left:675px;top:471px" width="6" height="9"><path d="M1 1 L4.5 4.5 L1 8" stroke="#333" stroke-width="1.1" fill="none"/></svg>
<svg class="a" style="left:620px;top:376px" width="14" height="20"><path d="M1 1 V16 L4.5 12.5 L7 18 L9.5 17 L7 11.5 H12Z" fill="#fff" stroke="#000" stroke-width="1"/></svg>
</body></html>
